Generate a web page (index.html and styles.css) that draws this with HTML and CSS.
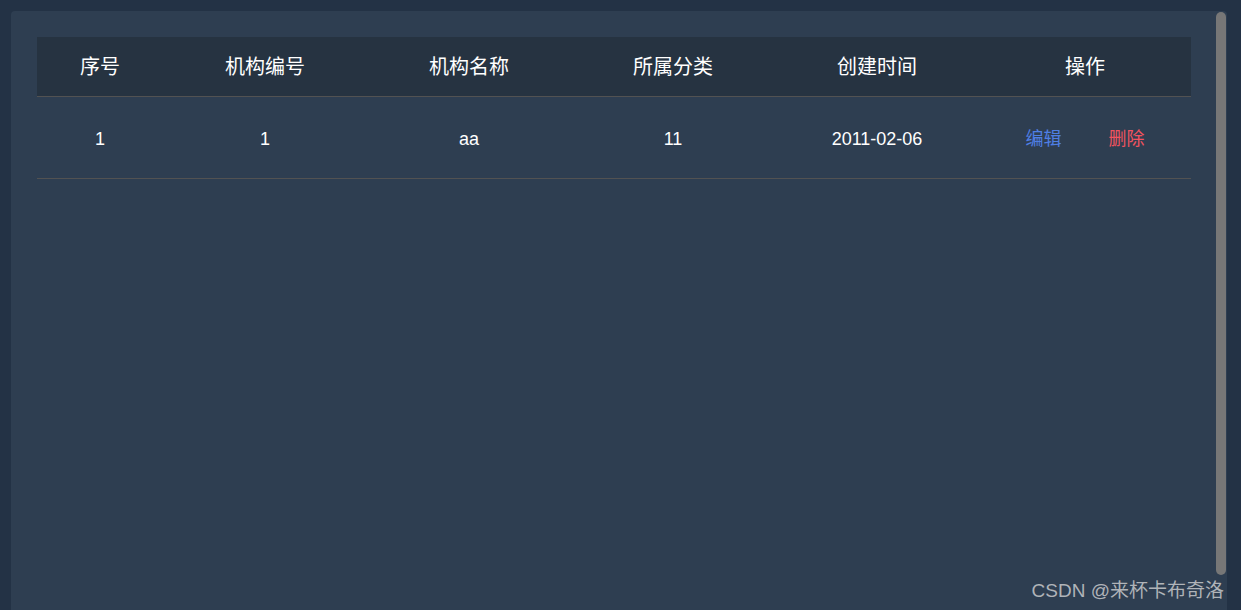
FILE: index.html
```html
<!DOCTYPE html>
<html lang="zh-CN">

<head>
    <meta charset="UTF-8">
    <meta name="viewport" content="width=device-width, initial-scale=1.0">
    <title>机构列表</title>
    <link rel="stylesheet" href="styles.css">
</head>

<body>
    <div class="panel">
        <table class="org-table">
            <thead>
                <tr>
                    <th class="col-index">序号</th>
                    <th>机构编号</th>
                    <th>机构名称</th>
                    <th>所属分类</th>
                    <th>创建时间</th>
                    <th class="col-op">操作</th>
                </tr>
            </thead>
            <tbody>
                <tr>
                    <td>1</td>
                    <td>1</td>
                    <td>aa</td>
                    <td>11</td>
                    <td>2011-02-06</td>
                    <td>
                        <div class="ops">
                            <a class="op op-edit" href="#">编辑</a>
                            <a class="op op-del" href="#">删除</a>
                        </div>
                    </td>
                </tr>
            </tbody>
        </table>
        <span class="scroll-thumb"></span>
    </div>
    <span class="watermark">CSDN @来杯卡布奇洛</span>
</body>

</html>
```
FILE: styles.css
```css
* {
    margin: 0;
    padding: 0;
    box-sizing: border-box;
}

html,
body {
    height: 100%;
    overflow: hidden;
}

body {
    background-color: #233245;
    font-family: "Liberation Sans", "Noto Sans CJK SC", sans-serif;
    color: #fff;
    padding: 11px 14px 0 11px;
}

.panel {
    position: relative;
    height: 599px;
    padding: 26px 36px 0 26px;
    background-color: #2e3e51;
    border-radius: 4px 4px 0 0;
    overflow: hidden;
}

/* 模拟滚动条 */
.scroll-thumb {
    position: absolute;
    top: 1px;
    right: 1px;
    width: 10px;
    height: 563px;
    background-color: #777;
    border-radius: 5px;
}

.org-table {
    width: 100%;
    border-collapse: collapse;
    table-layout: fixed;
}

.org-table th,
.org-table td {
    width: 204px;
    text-align: center;
    font-weight: normal;
    border-bottom: 1px solid #525252;
}

.org-table th {
    height: 59px;
    padding-top: 2px;
    font-size: 20px;
    line-height: 24px;
    background-color: #263341;
}

.org-table th.col-index {
    width: 126px;
}

.org-table th.col-op {
    width: 212px;
}

.org-table td {
    height: 82px;
    padding-top: 3px;
    font-size: 18px;
    line-height: 22px;
}

.ops {
    display: flex;
    justify-content: center;
    gap: 47px;
}

.op {
    text-decoration: none;
    font-size: 18px;
}

.op-edit {
    color: #4f7fe4;
}

.op-del {
    color: #f2535f;
}

.watermark {
    position: absolute;
    right: 17px;
    bottom: 8px;
    font-size: 19px;
    color: rgba(220, 220, 220, 0.75);
}
```
